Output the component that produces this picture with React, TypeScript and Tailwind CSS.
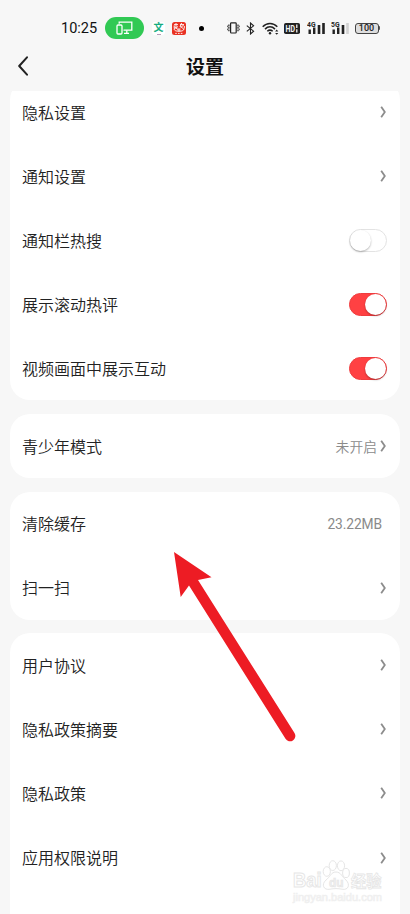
import React from 'react';

interface RowItem {
  label: string;
  value?: string;
  arrow?: boolean;
  toggle?: boolean;
}

const groups: RowItem[][] = [
  [
    { label: '隐私设置', arrow: true },
    { label: '通知设置', arrow: true },
    { label: '通知栏热搜', toggle: false },
    { label: '展示滚动热评', toggle: true },
    { label: '视频画面中展示互动', toggle: true },
  ],
  [{ label: '青少年模式', value: '未开启', arrow: true }],
  [
    { label: '清除缓存', value: '23.22MB' },
    { label: '扫一扫', arrow: true },
  ],
  [
    { label: '用户协议', arrow: true },
    { label: '隐私政策摘要', arrow: true },
    { label: '隐私政策', arrow: true },
    { label: '应用权限说明', arrow: true },
    { label: '', arrow: false },
  ],
];

function Chevron() {
  return (
    <svg className="w-[7px] h-3" viewBox="0 0 7 12" fill="none" stroke="#8c8c8c" strokeWidth="1.8">
      <path d="M1.2 .8 L4.8 6 L1.2 11.2" />
    </svg>
  );
}

function Toggle({ on }: { on: boolean }) {
  return (
    <div
      className={`flex items-center w-[38px] h-[23px] rounded-full border ${
        on ? 'justify-end bg-[#ff4143] border-[#f03c3e]' : 'justify-start bg-white border-[#e3e3e3]'
      }`}
    >
      <div className="w-[21px] h-[21px] rounded-full bg-white shadow-[0_1px_2px_rgba(0,0,0,0.3)]" />
    </div>
  );
}

function Row({ item }: { item: RowItem }) {
  return (
    <div className="flex items-center justify-between h-[64.1px] pl-3 pr-[13px]">
      <span className="text-base leading-6 font-[350] text-[#222222] pt-[3.2px]">{item.label}</span>
      <div className="flex items-center">
        {item.value && (
          <span className={`text-[#8a8a8a] leading-5 ${item.arrow ? 'text-[13.8px] font-[350] mr-[3px] pt-0.5' : 'text-[13.8px] tracking-[-0.1px] mr-[5px] pt-px'}`}>
            {item.value}
          </span>
        )}
        {item.arrow && <Chevron />}
        {item.toggle !== undefined && <Toggle on={item.toggle} />}
      </div>
    </div>
  );
}

function Signal({ label, weak }: { label: string; weak?: boolean }) {
  return (
    <svg className="w-[19px] h-[14px]" viewBox="0 0 19 14">
      <text x="0" y="6" fontSize="6.8" fontWeight="700" fontFamily="Roboto, sans-serif" fill="#222">{label}</text>
      <rect x="1.5" y="8.5" width="2.4" height="4.5" fill="#222" />
      <rect x="6" y="6.5" width="2.4" height="6.5" fill="#222" />
      <rect x="10.7" y="4" width="2.6" height="9" fill="#222" />
      <rect x="15.2" y="2" width="2.6" height="11" fill={weak ? '#d2d2d2' : '#222'} />
    </svg>
  );
}

function StatusBar() {
  return (
    <div className="flex items-center h-[22px] mt-[17px] pl-[61px]">
      <span className="w-[37px] text-[14.5px] leading-5 font-[450] text-[#111111] whitespace-nowrap pt-px">10:25</span>
      {/* Screen cast */}
      <div className="flex items-center justify-center w-[39px] h-[22px] ml-[7px] rounded-full bg-[#31c954]">
        <svg className="w-[17px] h-[14px]" viewBox="0 0 17 14" fill="none" stroke="white" strokeWidth="1.3">
          <rect x="1" y="4" width="5" height="9" rx="1" />
          <path d="M3.2 2.8 V1.2 H15.8 V9.2 H7.5" />
          <path d="M8 12.4 H13 M10.8 9.2 V12.4" />
        </svg>
      </div>
      {/* Notification icons */}
      <div className="relative flex items-center justify-center w-[13px] h-[13px] ml-2 rounded-[3px] bg-white text-[10px] leading-none font-bold text-[#15ac7f]">
        文
        <span className="absolute bottom-0 w-1 h-px bg-[#b49bb8]" />
      </div>
      <svg className="w-[14px] h-[13px] ml-[7px]" viewBox="0 0 14 13">
        <rect width="14" height="13" rx="2.5" fill="#e93223" />
        <g fill="none" stroke="white" strokeWidth=".9">
          <path d="M2 2.6 H6 M4 1 V5 M2.2 3.4 V6.6 L6 4.6 M2.4 5 L6 7.4" />
          <path d="M8 2.6 H12 L8.4 6 M9.6 1 L8 5 M8.4 4.2 L12 7.4 M12.3 4 V6.6" />
          <path d="M1.8 7 Q2.4 9.4 7 9.4 T12.2 7 M5.4 8 H8.6 M7 6 V9" />
          <path d="M3.2 11.4 H10.8" strokeDasharray="1.6 1.2" />
        </g>
      </svg>
      <span className="w-[5px] h-[5px] ml-[12.5px] rounded-full bg-black" />

      {/* Vibrate */}
      <svg className="w-[13px] h-3 ml-[23px]" viewBox="0 0 13 12" fill="none" stroke="#222" strokeWidth="1.2">
        <rect x="3.6" y=".8" width="5.6" height="10.2" rx=".8" />
        <path d="M1.9 2.6 V9.2 M11 2.6 V9.2" strokeDasharray="1.8 .6" />
        <path d="M.6 3.6 V5.2 M.6 6.6 V8.2 M12.3 3.6 V5.2 M12.3 6.6 V8.2" strokeWidth=".8" />
      </svg>
      {/* Bluetooth */}
      <svg className="w-[9px] h-[13px] ml-1.5" viewBox="0 0 9 13" fill="none" stroke="#222" strokeWidth="1.1">
        <path d="M.8 3.6 L7.6 9.2 L4.5 12 V1 L7.6 3.8 L.8 9.4" />
      </svg>
      {/* Wifi */}
      <svg className="w-[17px] h-[13px] ml-[7px]" viewBox="0 0 17 13" fill="none" stroke="#222" strokeWidth="1.5">
        <path d="M.7 4.8 C4.8 .3 11.2 .3 15.3 4.8" />
        <path d="M3 7.1 C6 4.1 10 4.1 13 7.1" />
        <path d="M5.3 9.3 C7 7.8 9 7.8 10.7 9.3" />
        <circle cx="8" cy="11.3" r="1.2" fill="#222" stroke="none" />
        <path d="M14.7 7.5 L16.3 9.4 H13.1 Z M14.7 12.8 L16.3 10.9 H13.1 Z" fill="#222" stroke="none" />
      </svg>
      {/* HD voice */}
      <svg className="w-4 h-[11px] ml-[5px]" viewBox="0 0 16 11">
        <rect width="16" height="11" rx="1.8" fill="#222" />
        <text x="1.6" y="8.8" fontSize="8.5" fontWeight="700" fontFamily="Roboto, sans-serif" fill="#f7f7f7" textLength="9.5" lengthAdjust="spacingAndGlyphs">HD</text>
        <path d="M12.8 1.6 V5 M12.8 6.3 V9.4" stroke="#f7f7f7" strokeWidth="1.3" />
      </svg>
      <div className="flex ml-[7px] gap-[5px]">
        <Signal label="4G" />
        <Signal label="5G" weak />
      </div>
      {/* Battery */}
      <div className="flex items-center ml-[5px]">
        <div className="flex items-center justify-center w-6 h-[11px] rounded-[3px] border border-[#444444] bg-[#dedede] text-[9px] leading-none font-medium text-[#222222]">
          <span className="h-2 leading-[9px]">100</span>
        </div>
        <div className="w-[1.5px] h-1 rounded-r bg-[#555555]" />
      </div>
    </div>
  );
}

function Watermark() {
  return (
    <svg className="absolute left-[290px] top-[856px] w-[96px] h-12" viewBox="0 0 96 48" fill="white" stroke="#e6e6e6" strokeWidth="1">
      <g fontFamily="Arial, 'Liberation Sans', sans-serif" fontWeight="700">
        <text x="3" y="31" fontSize="19.5" textLength="28.5" lengthAdjust="spacingAndGlyphs">Bai</text>
        <ellipse cx="36.8" cy="15.5" rx="3.6" ry="4.8" />
        <ellipse cx="42.8" cy="9.6" rx="3.6" ry="4.9" />
        <ellipse cx="51" cy="9.8" rx="3.6" ry="4.9" />
        <ellipse cx="56" cy="17" rx="3.4" ry="4.6" />
        <path d="M46 16 C41 16 40 21 36 24 C31 28.5 33.5 34.5 40 33.2 C44 32.4 48 32.4 52 33.2 C58.5 34.5 60.5 28.5 56 24 C52 21 51 16 46 16 Z" />
        <text x="39" y="31" fontSize="12.5" fill="#f0f0f0" strokeWidth=".7" textLength="14.5" lengthAdjust="spacingAndGlyphs">du</text>
      </g>
      <text x="61" y="31" fontSize="15.5" fontWeight="700" fontFamily="'Noto Sans CJK SC', sans-serif" strokeWidth=".8" textLength="30.5" lengthAdjust="spacingAndGlyphs">经验</text>
      <text x="3" y="44.5" fontSize="10" fontFamily="Arial, 'Liberation Sans', sans-serif" fill="#f6f6f6" stroke="#efefef" strokeWidth=".6" textLength="89" lengthAdjust="spacingAndGlyphs">jingyan.baidu.com</text>
    </svg>
  );
}

export default function App() {
  return (
    <div className="relative flex flex-col w-[410px] h-[914px] overflow-hidden bg-[#f7f7f7] font-[Roboto,'Noto_Sans_CJK_SC',sans-serif]">
      <StatusBar />

      {/* Title bar */}
      <div className="grid grid-cols-3 items-center h-[52px] shrink-0">
        <svg className="w-3 h-5 ml-[17px] mt-px" viewBox="0 0 12 20" fill="none" stroke="#222" strokeWidth="2" strokeLinecap="round" strokeLinejoin="round">
          <path d="M10 1.3 L2.2 10 L10 18.7" />
        </svg>
        <h1 className="text-center text-[19px] leading-7 font-bold text-[#111111] pt-1.5">设置</h1>
      </div>

      {/* Settings list, scrolled a little past the first row's top */}
      <div className="flex-1 min-h-0 overflow-hidden mx-2.5">
        <div className="flex flex-col gap-[13.5px] -mt-[11px]">
          {groups.map((items, i) => (
            <div key={i} className="bg-white rounded-[20px]">
              {items.map((item) => (
                <Row key={item.label} item={item} />
              ))}
            </div>
          ))}
        </div>
      </div>

      {/* Pointer arrow */}
      <svg className="absolute left-[160px] top-[540px] w-[150px] h-[210px]" viewBox="160 540 150 210" fill="#ed1c24">
        <path d="M174 552 L211.5 577.3 L198 580 L294.5 733 A5.3 5.3 0 0 1 285.5 738.8 L189 585.5 L180.7 597 Z" />
      </svg>

      <Watermark />
    </div>
  );
}
